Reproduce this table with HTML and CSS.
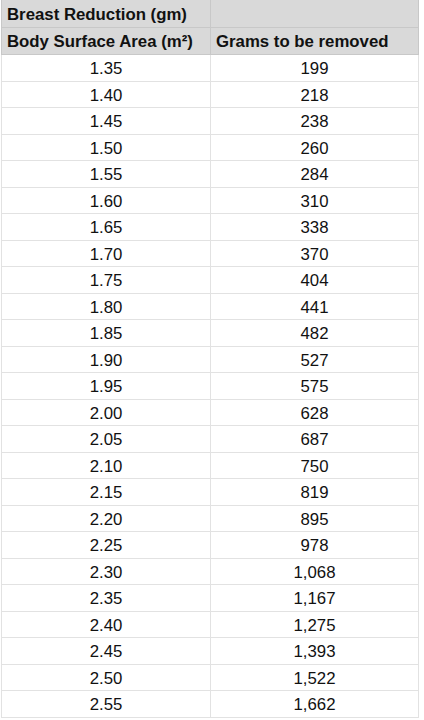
FILE: index.html
```html
<!DOCTYPE html>
<html>
<head>
<meta charset="utf-8">
<link rel="stylesheet" href="styles.css">
</head>
<body>
<table class="sheet">
  <thead>
    <tr class="head"><th>Breast Reduction (gm)</th><th></th></tr>
    <tr class="head"><th>Body Surface Area (m²)</th><th>Grams to be removed</th></tr>
  </thead>
  <tbody>
    <tr><td>1.35</td><td>199</td></tr>
    <tr><td>1.40</td><td>218</td></tr>
    <tr><td>1.45</td><td>238</td></tr>
    <tr><td>1.50</td><td>260</td></tr>
    <tr><td>1.55</td><td>284</td></tr>
    <tr><td>1.60</td><td>310</td></tr>
    <tr><td>1.65</td><td>338</td></tr>
    <tr><td>1.70</td><td>370</td></tr>
    <tr><td>1.75</td><td>404</td></tr>
    <tr><td>1.80</td><td>441</td></tr>
    <tr><td>1.85</td><td>482</td></tr>
    <tr><td>1.90</td><td>527</td></tr>
    <tr><td>1.95</td><td>575</td></tr>
    <tr><td>2.00</td><td>628</td></tr>
    <tr><td>2.05</td><td>687</td></tr>
    <tr><td>2.10</td><td>750</td></tr>
    <tr><td>2.15</td><td>819</td></tr>
    <tr><td>2.20</td><td>895</td></tr>
    <tr><td>2.25</td><td>978</td></tr>
    <tr><td>2.30</td><td>1,068</td></tr>
    <tr><td>2.35</td><td>1,167</td></tr>
    <tr><td>2.40</td><td>1,275</td></tr>
    <tr><td>2.45</td><td>1,393</td></tr>
    <tr><td>2.50</td><td>1,522</td></tr>
    <tr><td>2.55</td><td>1,662</td></tr>
  </tbody>
</table>
</body>
</html>
```
FILE: styles.css
```css
html, body {
  margin: 0;
  padding: 0;
  background: #ffffff;
}
body {
  font-family: "Liberation Sans", Arial, sans-serif;
  color: #111111;
}
.sheet {
  border-collapse: collapse;
  table-layout: fixed;
  width: 418px;
  margin-left: 1px;
}
.sheet th, .sheet td {
  border: 1px solid #e2e2e2;
  height: 23.5px;
  padding: 2px 5px 0;
  font-size: 16.8px;
  line-height: 19px;
  white-space: nowrap;
  overflow: hidden;
}
.sheet th {
  height: 24.5px;
  background: #d9d9d9;
  font-weight: bold;
  text-align: left;
  border-color: #c8c8c8;
}
.sheet td {
  text-align: center;
}
.sheet th:first-child, .sheet td:first-child {
  width: 198px;
}
.sheet tr.head:first-child th {
  border-top: none;
}
```
